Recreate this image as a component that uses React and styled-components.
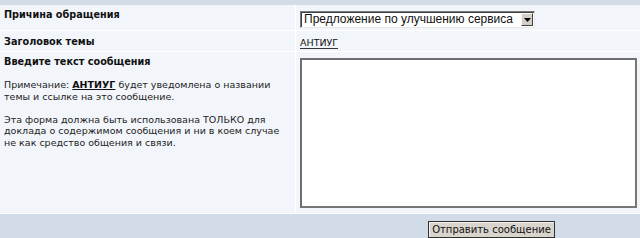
import styled, { createGlobalStyle } from "styled-components";

const GlobalStyle = createGlobalStyle`
  html, body {
    margin: 0;
    padding: 0;
    background: #ffffff;
  }
  body {
    font-family: "DejaVu Sans", Verdana, sans-serif;
    color: #000;
  }
`;

const Page = styled.div`
  width: 640px;
  height: 238px;
  background: #d1dce8;
  padding-top: 5px;
  box-sizing: border-box;
  display: flex;
  flex-direction: column;
`;

const Row = styled.div`
  display: grid;
  grid-template-columns: 295px 1fr;
  column-gap: 1px;
  height: ${(p) => p.$h}px;
  border-bottom: 1px solid #ffffff;
  background: #ffffff;
`;

const Cell = styled.div`
  background: #f2f6fb;
  padding: ${(p) => p.$pt || 0}px 3px 0 ${(p) => p.$pl || 4}px;
  box-sizing: border-box;
  min-width: 0;
  font-size: 9.5px;
  line-height: 12px;
`;

const Label = styled.div`
  font-weight: bold;
  font-size: 9.7px;
  line-height: 14px;
  color: #111;
`;

const Note = styled.p`
  margin: ${(p) => p.$mt || 0}px 0 0;
  font-size: 9.5px;
  line-height: 11.6px;
  color: #222;
`;

const Strong = styled.a`
  font-weight: bold;
  color: #111;
  text-decoration: underline;
`;

const TopicLink = styled.a`
  display: inline-block;
  font-size: 9.5px;
  line-height: 11px;
  color: #111;
  text-decoration: none;
  border-bottom: 1px solid #333;
`;

const Select = styled.div`
  width: 235px;
  height: 17px;
  box-sizing: border-box;
  display: flex;
  align-items: stretch;
  background: #fff;
  border-top: 1px solid #7a7a7a;
  border-left: 1px solid #7a7a7a;
  border-right: 1px solid #e8e8e8;
  border-bottom: 1px solid #e8e8e8;
  box-shadow: inset 1px 1px 0 #404040;
`;

const SelectText = styled.span`
  flex: 1;
  font-family: "Liberation Sans", Arial, sans-serif;
  font-size: 12px;
  line-height: 15px;
  padding-left: 3px;
  color: #111;
  white-space: nowrap;
  overflow: hidden;
`;

const Arrow = styled.span`
  width: 12px;
  margin: 1px 1px 1px 0;
  background: #d4d0c8;
  box-sizing: border-box;
  border-top: 1px solid #fff;
  border-left: 1px solid #fff;
  border-right: 1px solid #404040;
  border-bottom: 1px solid #404040;
  display: flex;
  align-items: center;
  justify-content: center;
`;

const TextArea = styled.div`
  height: 150px;
  box-sizing: border-box;
  background: #fff;
  border: 2px solid #777;
  border-top-color: #6e6e6e;
  border-left-color: #6e6e6e;
`;

const Footer = styled.div`
  flex: 1;
  display: flex;
  align-items: flex-start;
  padding: 7px 0 0 428px;
  box-sizing: border-box;
`;

const Button = styled.button`
  width: 127px;
  height: 17px;
  padding: 0;
  font-family: "DejaVu Sans", Verdana, sans-serif;
  font-size: 10px;
  line-height: 13px;
  color: #111;
  background: #d9d4cc;
  border: 1px solid #303030;
  box-shadow: inset 1px 1px 0 #f4f2ee;
`;

export default function App() {
  return (
    <>
      <GlobalStyle />
      <Page>
        <Row $h={25}>
          <Cell $pt={3}>
            <Label>Причина обращения</Label>
          </Cell>
          <Cell $pt={6} $pl={4}>
            <Select>
              <SelectText>Предложение по улучшению сервиса</SelectText>
              <Arrow>
                <svg width="7" height="4" viewBox="0 0 7 4">
                  <path d="M0 0h7L3.5 4z" fill="#000" />
                </svg>
              </Arrow>
            </Select>
          </Cell>
        </Row>
        <Row $h={20}>
          <Cell $pt={4}>
            <Label>Заголовок темы</Label>
          </Cell>
          <Cell $pt={6} $pl={4}>
            <TopicLink href="#">АНТИУГ</TopicLink>
          </Cell>
        </Row>
        <Row $h={161}>
          <Cell $pt={3}>
            <Label>Введите текст сообщения</Label>
            <Note $mt={10}>
              Примечание: <Strong href="#">АНТИУГ</Strong> будет уведомлена о
              названии темы и ссылке на это сообщение.
            </Note>
            <Note $mt={11.6}>
              Эта форма должна быть использована ТОЛЬКО для доклада о
              содержимом сообщения и ни в коем случае не как средство общения и
              связи.
            </Note>
          </Cell>
          <Cell $pt={6} $pl={4}>
            <TextArea />
          </Cell>
        </Row>
        <Footer>
          <Button>Отправить сообщение</Button>
        </Footer>
      </Page>
    </>
  );
}
